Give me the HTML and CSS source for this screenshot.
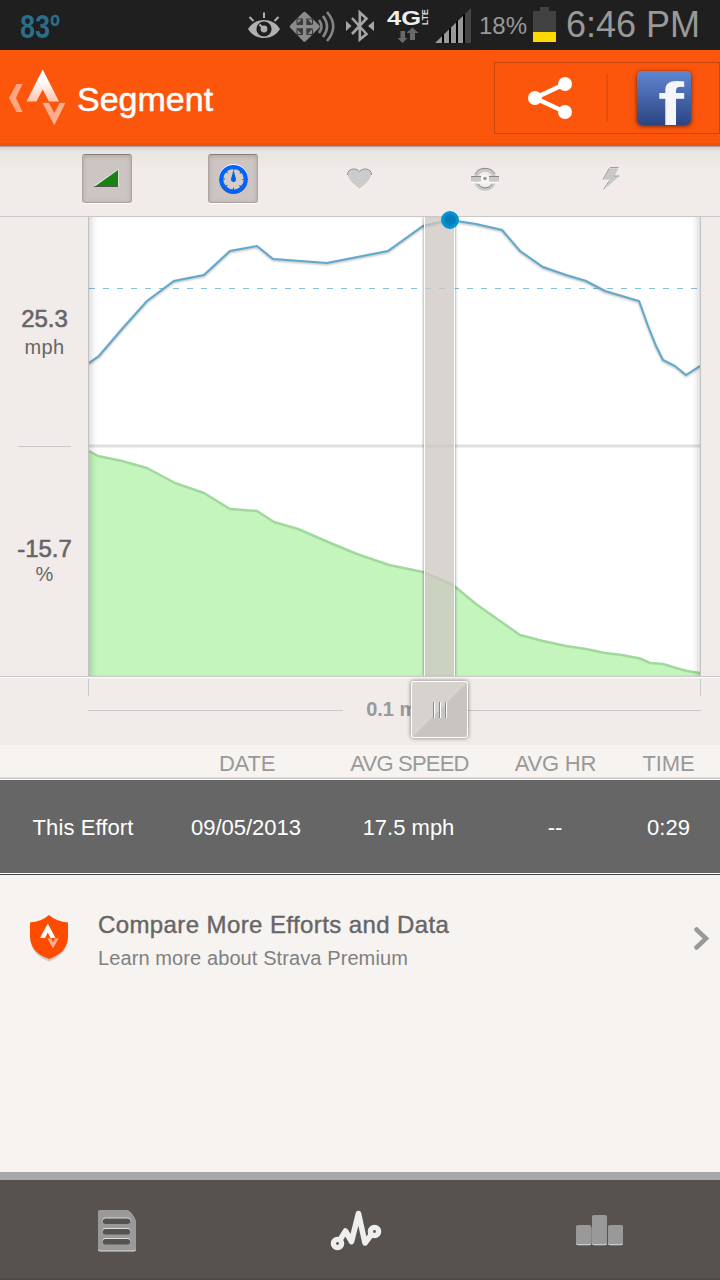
FILE: index.html
```html
<!DOCTYPE html>
<html lang="en-US">
  <head>
    <meta charset="utf-8">
    <meta name="viewport" content="width=device-width, initial-scale=1">
    <title>Segment</title>
    <link rel="stylesheet" href="styles.css">
  </head>
<body>

<!-- Status bar -->
<div class="statusbar">
  <span class="temp">83º</span>
  <svg class="eye" width="34" height="50" viewBox="247 0 34 50">
    <path d="M248 29C255 17 273 17 280 29C273 41 255 41 248 29Z" fill="#b0b0b0"/>
    <circle cx="264" cy="29" r="7.600" fill="#1f1f1f"/>
    <circle cx="264" cy="29" r="3.400" fill="#b0b0b0"/>
    <path d="M264 29L259.500 24.500M264 12.500V18M249.500 17L253.500 21M278.500 17L274.500 21" stroke="#b0b0b0" stroke-width="2"/>
  </svg>
  <svg class="nfc" width="48" height="50" viewBox="289 0 48 50">
    <path d="M304.500 13.500L318 26.500L304.500 40L291.500 26.500Z" fill="#8b8b8b" stroke="#8b8b8b" stroke-width="3.500" stroke-linejoin="round"/>
    <path d="M303 18V25H296ZM306.300 18V25H313ZM303 35.500V28.300H296ZM306.300 35.500V28.300H313Z" fill="#3a3a3a"/>
    <path d="M297 24V19H302M307.500 19H312.500V24M297 29.500V34.500H302M307.500 34.500H312.500V29.500" fill="none" stroke="#333"/>
    <path d="M319 20Q324 26.500 319 33M323 16Q331 26.500 323 37M327 12Q339.500 26.500 327 41" fill="none" stroke="#858585" stroke-width="2.600"/>
  </svg>
  <svg class="bluetooth" width="30" height="50" viewBox="345 0 30 50">
    <path d="M352 18L366.500 34L359.800 39.500V12.500L366.500 18.500L352 34" fill="none" stroke="#a6a6a6" stroke-width="2.600"/>
    <path d="M346 21L351.500 26L346 31ZM374 21L368 26L374 31Z" fill="#a6a6a6"/>
  </svg>
  <svg class="lte" width="42" height="50" viewBox="387 0 42 50">
    <text class="g4" x="387" y="24.500" textLength="34" lengthAdjust="spacingAndGlyphs">4G</text>
    <text class="lte-text" transform="translate(428 25) rotate(-90)" textLength="16" lengthAdjust="spacingAndGlyphs">LTE</text>
    <path d="M400.500 31H405V38H407.500L402.500 43L397.500 38H400.500ZM410 40V33H406.500L412.500 27.500L418.500 33H415V40Z" fill="#686868"/>
  </svg>
  <svg class="signal" width="36" height="50" viewBox="435 0 36 50">
    <path d="M435 43L464 15V43Z" fill="#999"/>
    <path d="M465 14L471 8V43H465Z" fill="#444"/>
    <path d="M443 34.500V43M450 28V43M457 21V43M464 14.500V43" stroke="#000" stroke-width="2"/>
  </svg>
  <span class="percent">18%</span>
  <svg class="battery" width="23" height="50" viewBox="533 0 23 50">
    <path d="M533 11H540V7H549V11H556V32H533Z" fill="#424242"/>
    <path d="M533 32H556V42H533Z" fill="#ffd800"/>
  </svg>
  <span class="clock">6:46 PM</span>
</div>

<!-- Title bar -->
<header class="header">
  <svg class="logo" width="60" height="93" viewBox="8 50 60 93">
    <defs>
      <linearGradient id="peak" x1="0" y1="0" x2="0" y2="1">
        <stop offset=".35" stop-color="#fff"/>
        <stop offset="1" stop-color="#ffc5ab"/>
      </linearGradient>
    </defs>
    <path d="M16.500 84H22.500L16 98L22.500 112H16.500L9 98Z" fill="#ffa582"/>
    <path d="M42.700 69.500L59 101.500H49L42.700 89.500L36.500 101.500H26.500Z" fill="url(#peak)"/>
    <path d="M42 102.500H49L54.300 112.500L59.500 102.500H66L54.300 126Z" fill="#ffad8b" stroke="#e24b08" stroke-width=".5"/>
  </svg>
  <h1 class="title">Segment</h1>
  <div class="actions">
    <div class="share">
      <svg width="46" height="44" viewBox="527 76 46 44">
        <path d="M565 84L535 98L565 112" fill="none" stroke="#fff" stroke-width="4.500"/>
        <circle cx="535" cy="98" r="7" fill="#fff"/>
        <circle cx="565" cy="84" r="7" fill="#fff"/>
        <circle cx="565" cy="112" r="7" fill="#fff"/>
      </svg>
    </div>
    <svg class="facebook" width="54" height="54" viewBox="0 0 54 54">
      <text x="21" y="54" textLength="26" lengthAdjust="spacingAndGlyphs">f</text>
    </svg>
  </div>
</header>

<!-- Graph toggles -->
<div class="toggles">
  <div class="toggle"><span class="on">
    <svg width="28" height="20" viewBox="94 169 28 20">
      <path d="M94 186.500L119.500 169V186.500Z" fill="#fff" opacity=".8"/>
      <path d="M95 187L119 170V187Z" fill="#1a8212"/>
      <path d="M95 186.500H119" stroke="#555"/>
    </svg>
  </span></div>
  <div class="toggle"><span class="on">
    <svg width="32" height="32" viewBox="217 163 32 32">
      <circle cx="233.500" cy="178.500" r="13" fill="none" stroke="#fff" stroke-width="3"/>
      <circle cx="233.500" cy="180" r="12.500" fill="none" stroke="#555" stroke-width="3"/>
      <circle cx="233.500" cy="179.200" r="12.300" fill="#d3cdca" stroke="#0062ff" stroke-width="4"/>
      <circle cx="233.500" cy="179.200" r="9.500" fill="none" stroke="#444" stroke-width="1.800" stroke-dasharray="1 6.461" stroke-dashoffset=".5"/>
      <path d="M233.500 170L236 179Q236 182 233.500 182Q231 182 231 179Z" fill="#0b5edf"/>
    </svg>
  </span></div>
  <div class="toggle">
    <svg width="28" height="26" viewBox="345 166 28 26">
      <path d="M359.500 189.500C355 185 347.500 181 347.500 174.500C347.500 168 356 167.500 359.500 171.500C363 167.500 371.500 168 371.500 174.500C371.500 181 364 185 359.500 189.500Z" fill="#ccc" stroke="#fff" stroke-width=".7"/>
      <path d="M347.500 175C347.500 168 356 167.500 359.500 171.500C363 167.500 371.500 168 371.500 175" fill="none" stroke="#888"/>
    </svg>
  </div>
  <div class="toggle">
    <svg width="30" height="26" viewBox="470 166 30 26">
      <circle cx="485" cy="179.500" r="9.500" fill="none" stroke="#c8c8c8" stroke-width="3.500"/>
      <path d="M475 174Q478 168.300 485 168.300Q492 168.300 495 174M478 184Q481 188 485 188Q490 188 492 184.500" fill="none" stroke="#888"/>
      <path d="M471 182.500H499" stroke="#f8f6f5" stroke-width="2"/>
      <path d="M471 179H481M489 179H499" stroke="#c8c8c8" stroke-width="5"/>
      <path d="M471 176.500H481M489 176.500H499" stroke="#888"/>
      <circle cx="485" cy="178.500" r="4" fill="#f8f6f5"/>
      <circle cx="485" cy="178.500" r="1.800" fill="#999"/>
    </svg>
  </div>
  <div class="toggle">
    <svg width="20" height="26" viewBox="601 166 20 26">
      <path d="M609 168H619L615 176H620L603.500 190.500L610 180H603Z" fill="#c8c8c8" stroke="#fff" stroke-width=".5"/>
      <path d="M610 167.500H618.500M614 176H619.500M603.500 189.500L609.500 180.500M603 179.500L609 168.500" stroke="#888" stroke-width=".8"/>
    </svg>
  </div>
</div>

<!-- Speed and grade graph -->
<div class="graph">
  <div class="values">
    <div class="value speed"><b>25.3</b><span>mph</span></div>
    <div class="value grade"><b>-15.7</b><span>%</span></div>
  </div>
  <div class="plot">
    <svg width="611" height="459" viewBox="89 217 611 459">
      <path class="average" d="M89 288.500H700"/>
      <path class="divider" d="M89 446H700"/>
      <path class="grade-area" d="M89 451L98 456L122 461L147 468L175 483L204 493L230 509L257 511L274 522L298 529L328 542L357 554L389 565L423 572L453 585L476 604L520 635L543 641L566 646L586 649L605 653L622 655L640 658.500L650 663L663 664L676 668L687 671L700 673V676H89Z"/>
      <path class="grade-line" d="M89 451L98 456L122 461L147 468L175 483L204 493L230 509L257 511L274 522L298 529L328 542L357 554L389 565L423 572L453 585L476 604L520 635L543 641L566 646L586 649L605 653L622 655L640 658.500L650 663L663 664L676 668L687 671L700 673"/>
      <path class="speed-line" d="M89 363L99 356L122 329L147 301L174 281L204 275L230 251L257 246L273 259L327 263L388 251L423 226L450 220L476 224L502 230L520 251L543 267L566 275L586 281L605 291L639 301L648 326L656 346L663 360L675 366L686 375L700 366"/>
    </svg>
    <div class="cursor"></div>
    <div class="dot"></div>
  </div>
</div>

<div class="scale">
  <div class="ruler"><span class="distance">0.1 mi</span></div>
  <div class="handle"><i></i><i></i><i></i></div>
</div>

<!-- Efforts -->
<div class="row heads">
  <span>DATE</span><span class="tight">AVG SPEED</span><span>AVG HR</span><span>TIME</span>
</div>
<div class="row effort">
  <span class="name">This Effort</span><span>09/05/2013</span><span>17.5 mph</span><span>--</span><span>0:29</span>
</div>

<div class="premium">
  <svg class="shield" width="40" height="48" viewBox="29 914 40 48">
    <path d="M49 917Q57 923 68 924V938Q67 955 49 961.500Q31 955 30 938V924Q41 923 49 917Z" fill="#d2cdca"/>
    <path d="M49 915Q57 922 68 922.500V937Q67 953 49 959Q31 953 30 937V922.500Q41 922 49 915Z" fill="#ff4b00"/>
    <path d="M47.800 923.500L55.500 938H50.500L47.800 932.500L45 938H40Z" fill="#fff"/>
    <path d="M47.500 938.500H51L53 942.500L55 938.500H58.500L53 948.500Z" fill="#ffb090"/>
  </svg>
  <div class="promo">
    <div class="promo-title">Compare More Efforts and Data</div>
    <div class="promo-text">Learn more about Strava Premium</div>
  </div>
  <svg class="chevron" width="16" height="26" viewBox="694 926 16 26">
    <path d="M696.500 929.500L706 938.500L696.500 947.500" fill="none" stroke="#999" stroke-width="4.500" stroke-linecap="round"/>
  </svg>
</div>

<!-- Bottom tabs -->
<nav class="tabs">
  <svg class="tab" width="38" height="42" viewBox="98 1210 38 42">
    <path d="M100 1211H127Q132 1212 136 1222V1249.500Q136 1251.500 134 1251.500H100Q98 1251.500 98 1249.500V1213Q98 1211 100 1211Z" fill="#ddd"/>
    <path d="M100 1210H127Q132 1211 136 1221V1248.500Q136 1250.500 134 1250.500H100Q98 1250.500 98 1248.500V1212Q98 1210 100 1210Z" fill="#999"/>
    <path d="M105.500 1220.500H127.500M105.500 1231H127.500M105.500 1241H127.500" stroke="#ddd" stroke-width="6" stroke-linecap="round"/>
    <path d="M105.500 1221.300H127.500M105.500 1231.800H127.500M105.500 1241.800H127.500" stroke="#58524e" stroke-width="5.500" stroke-linecap="round"/>
  </svg>
  <svg class="tab" width="52" height="42" viewBox="330 1209 52 42">
    <path d="M338 1242L345.500 1230L351.500 1240.500L358.500 1212.500L365 1242L374 1230" fill="none" stroke="#eee" stroke-width="5.600" stroke-linejoin="round"/>
    <circle cx="337.500" cy="1242.500" r="4.100" fill="#58524e" stroke="#eee" stroke-width="5.400"/>
    <circle cx="374.500" cy="1230.500" r="4.100" fill="#58524e" stroke="#eee" stroke-width="5.400"/>
  </svg>
  <svg class="tab" width="48" height="32" viewBox="576 1215 48 32">
    <g fill="#ddd">
      <rect x="576" y="1226" width="15.300" height="19.200" rx="2"/>
      <rect x="592" y="1216" width="15" height="29.200" rx="2"/>
      <rect x="608" y="1226" width="15" height="19.200" rx="2"/>
    </g>
    <g fill="#999">
      <rect x="576" y="1225" width="15.300" height="19.200" rx="2"/>
      <rect x="592" y="1215" width="15" height="29.200" rx="2"/>
      <rect x="608" y="1225" width="15" height="19.200" rx="2"/>
    </g>
  </svg>
</nav>

</body>
</html>
```
FILE: styles.css
```css
* {
  box-sizing: border-box;
}

body {
  margin: 0;
  width: 720px;
  height: 1280px;
  display: flex;
  flex-direction: column;
  overflow: hidden;
  background-color: #f6f3f0;
  color: #666;
  font-family: "Liberation Sans", Arial, Helvetica, sans-serif;
}

svg {
  display: block;
  flex: none;
}

/* Status bar */
.statusbar {
  height: 50px;
  flex: none;
  display: flex;
  background-color: #1f1f1f;
  color: #999;
  line-height: 50px;
  white-space: nowrap;
}

.temp {
  width: 227px;
  margin-left: 20px;
  color: #2a6e8c;
  font-size: 33px;
  font-weight: bold;
  line-height: 54px;
  transform: scaleX(.82);
  transform-origin: left;
}

.nfc {
  margin-left: 8px;
}

.bluetooth {
  margin-left: 8px;
}

.lte {
  margin-left: 12px;
}

.g4 {
  fill: #eee;
  font-size: 21px;
  font-weight: bold;
}

.lte-text {
  fill: #ddd;
  font-size: 9px;
  font-weight: bold;
}

.signal {
  margin-left: 6px;
}

.percent {
  width: 54px;
  margin-left: 8px;
  padding-top: 1px;
  font-size: 24px;
}

.clock {
  margin-left: 10px;
  font-size: 36px;
}

/* Title bar */
.header {
  height: 96px;
  flex: none;
  display: flex;
  background-color: #fc560d;
  border-bottom: 3px solid #ef500b;
}

.logo {
  margin-left: 8px;
}

.title {
  width: 417px;
  margin: 0;
  padding-left: 9px;
  color: #fff;
  font-size: 34px;
  font-weight: normal;
  line-height: 99px;
  -webkit-text-stroke: .5px #fff;
}

.actions {
  width: 226px;
  height: 72px;
  margin: 12px 0 0 9px;
  display: flex;
  align-items: center;
  border: 1px solid #c8450b;
}

.share {
  width: 113px;
  height: 48px;
  padding-left: 32px;
  display: flex;
  align-items: center;
  border-right: 2px solid #e64d0b;
}

.facebook {
  margin-left: 29px;
  overflow: visible;
  border-radius: 5px;
  background: linear-gradient(#6085d0, #2b4583);
  box-shadow: 0 1px 4px #5c2108;
  fill: #f4f6fc;
  font-size: 62px;
  font-weight: bold;
}

/* Graph toggles */
.toggles {
  height: 71px;
  flex: none;
  padding: 0 46px 6px 44px;
  display: flex;
  align-items: center;
  background: linear-gradient(#d5d1cf, #e8e4e2 4px, #f1ecea 24px);
  border-top: 1px solid #aaa5a2;
  border-bottom: 1px solid #c8c8c8;
}

.toggle {
  width: 126px;
  display: flex;
  justify-content: center;
}

.on {
  width: 50px;
  height: 49px;
  display: flex;
  align-items: center;
  justify-content: center;
  background-color: #cdc5c2;
  border: 1px solid #aaa3a0;
  border-top-color: #87817e;
  border-radius: 3px;
  box-shadow: inset 0 1px 4px #aaa3a0, 0 1px 0 #fff;
}

/* Graph */
.graph {
  height: 459px;
  flex: none;
  display: flex;
  background-color: #f1ecea;
}

.values {
  width: 88px;
  text-align: center;
}

.value {
  height: 230px;
  margin: 0 17px 0 18px;
  display: flex;
  flex-direction: column;
  align-items: center;
  font-size: 20px;
  line-height: 26px;
}

.value b {
  font-size: 24px;
  font-weight: normal;
  line-height: 28px;
  -webkit-text-stroke: .6px #666;
}

.speed {
  padding-top: 88px;
  border-bottom: 1px solid #c8c8c8;
}

.speed span {
  letter-spacing: .4px;
  line-height: 28px;
}

.grade {
  padding-top: 88px;
}

.grade span {
  line-height: 23px;
}

.plot {
  position: relative;
  width: 613px;
  background-color: #fff;
  border: 1px solid #c2c2c2;
  border-width: 0 1px;
}

.plot::after {
  content: "";
  position: absolute;
  inset: 0;
  box-shadow: inset 7px 0 7px -5px rgba(0, 0, 0, .18), inset -7px 0 7px -5px rgba(0, 0, 0, .18);
}

.average {
  fill: none;
  stroke: #84bfdc;
  stroke-dasharray: 6 8;
}

.divider {
  stroke: #e0e0e0;
  stroke-width: 3;
}

.grade-area {
  fill: #c3f5bd;
}

.grade-line {
  fill: none;
  stroke: #a0d99b;
  stroke-width: 2.5;
  stroke-linejoin: round;
}

.speed-line {
  fill: none;
  stroke: #62a8cd;
  stroke-width: 2;
  filter: drop-shadow(0 1px 1px rgba(0, 0, 0, .3));
}

.cursor {
  position: absolute;
  top: 0;
  left: 335px;
  width: 31px;
  height: 459px;
  background-color: rgba(205, 197, 192, .75);
  border: 1px solid #fff;
  border-width: 0 1px;
  box-shadow: 0 0 3px rgba(0, 0, 0, .5);
  clip-path: inset(0 -4px);
}

.dot {
  position: absolute;
  z-index: 1;
  top: -6px;
  left: 352px;
  width: 18px;
  height: 18px;
  border: 3px solid #0794d6;
  border-radius: 50%;
  background-color: #007fb8;
}

/* Distance scale */
.scale {
  position: relative;
  height: 69px;
  flex: none;
  background-color: #f1ecea;
  border-top: 1px solid #c8c8c8;
  box-shadow: inset 0 1px 0 #fff;
}

.ruler {
  height: 66px;
  margin: 0 19px 0 88px;
  display: flex;
  align-items: center;
  background: linear-gradient(#c8c8c8, #c8c8c8) 0 2px / 1px 17px no-repeat,
    linear-gradient(#c8c8c8, #c8c8c8) 100% 2px / 1px 17px no-repeat;
}

.ruler::before,
.ruler::after {
  content: "";
  height: 1px;
  flex: 1;
  background-color: #c8c8c8;
}

.distance {
  width: 104px;
  padding-bottom: 2px;
  text-align: center;
  color: #999;
  font-size: 20px;
  font-weight: bold;
}

.handle {
  position: absolute;
  top: 4px;
  left: 411px;
  width: 57px;
  height: 57px;
  display: flex;
  align-items: center;
  justify-content: center;
  gap: 4px;
  background: linear-gradient(135deg, #d6d2cf 50%, #c9c4c0 50%);
  border: 1px solid #fff;
  border-radius: 3px;
  box-shadow: 0 0 4px rgba(0, 0, 0, .5);
}

.handle i {
  width: 2px;
  height: 16px;
  background-color: #fff;
  border-left: 1px solid #8d8986;
}

/* Efforts */
.row {
  flex: none;
  display: grid;
  grid-template-columns: 166px 160px 165px 128px 101px;
  text-align: center;
  font-size: 22px;
  white-space: nowrap;
}

.row span:last-child {
  padding-right: 2px;
}

.heads {
  height: 35px;
  padding-left: 167px;
  grid-template-columns: 160px 165px 127px 101px;
  line-height: 37px;
  color: #999;
  letter-spacing: -.2px;
  border-bottom: 1px solid #fff;
  box-shadow: inset 0 -1px 0 #c8c2c2, inset 0 -2px 0 #e4dedc;
}

.tight {
  letter-spacing: -.8px;
}

.effort {
  height: 95px;
  line-height: 96px;
  color: #fff;
  background-color: #666;
  border-bottom: 1px solid #444;
  box-shadow: inset 0 -1px 0 #fff;
}

.name {
  letter-spacing: .1px;
}

/* Premium */
.premium {
  height: 297px;
  flex: none;
  padding: 33px 10px 0 29px;
  display: flex;
  align-items: flex-start;
}

.shield {
  margin-top: 6px;
}

.promo {
  width: 625px;
  padding-left: 29px;
}

.promo-title {
  font-size: 24px;
  letter-spacing: .4px;
  line-height: 34px;
  -webkit-text-stroke: .4px #666;
}

.promo-text {
  color: #808080;
  font-size: 20px;
  letter-spacing: .1px;
  line-height: 32px;
}

.chevron {
  margin-top: 18px;
}

/* Bottom tabs */
.tabs {
  height: 108px;
  flex: none;
  padding: 2px 96px 0 98px;
  display: flex;
  align-items: center;
  justify-content: space-between;
  background-color: #58524e;
  border-top: 8px solid #a7a8aa;
  box-shadow: inset 0 -2px 0 #4e4945;
}
```
